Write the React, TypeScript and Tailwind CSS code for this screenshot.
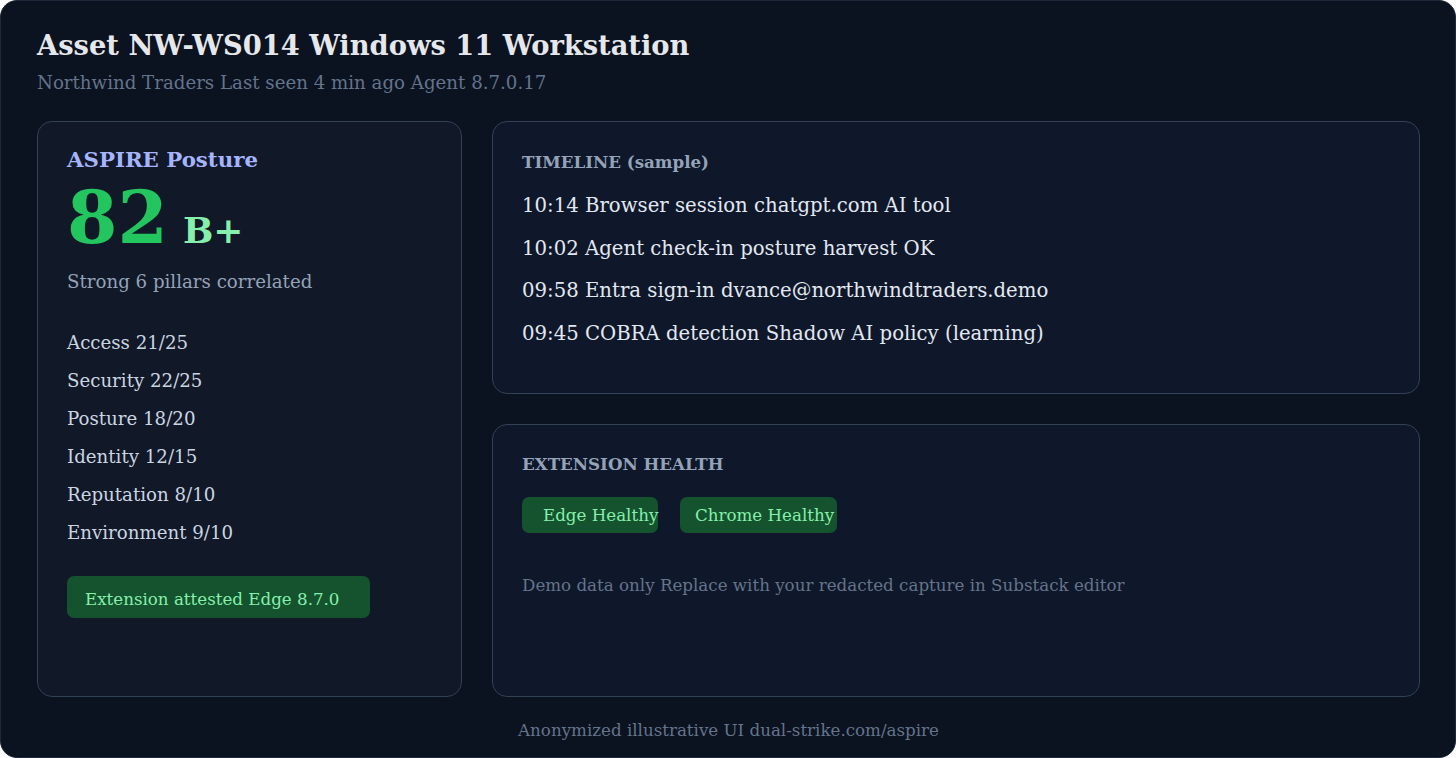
import React from "react";

const serif = { fontFamily: '"DejaVu Serif", serif' };

export default function App() {
  const pillars = [
    "Access 21/25",
    "Security 22/25",
    "Posture 18/20",
    "Identity 12/15",
    "Reputation 8/10",
    "Environment 9/10",
  ];
  const events = [
    "10:14 Browser session chatgpt.com AI tool",
    "10:02 Agent check-in posture harvest OK",
    "09:58 Entra sign-in dvance@northwindtraders.demo",
    "09:45 COBRA detection Shadow AI policy (learning)",
  ];
  return (
    <div className="w-[1456px] h-[758px] bg-white" style={serif}>
      <div className="w-full h-full rounded-[17px] bg-[#0b1220] border border-[#1e293b] pl-[36px] pr-[35px] pt-[28px] flex flex-col">
        <div className="text-[27.3px] leading-[32px] font-bold text-[#e5e7eb] whitespace-nowrap">
          Asset NW-WS014 Windows 11 Workstation
        </div>
        <div className="mt-[11px] text-[18.2px] leading-[22px] text-[#64748b] whitespace-nowrap">
          Northwind Traders Last seen 4 min ago Agent 8.7.0.17
        </div>

        <div className="mt-[27px] grid grid-cols-[425px_928px] gap-[30px] h-[576px]">
          {/* Left card */}
          <div className="h-[576px] rounded-[15px] border border-[#334155] bg-[#111827] pl-[29px] pt-[25px] flex flex-col">
            <div className="text-[21.3px] leading-[26px] font-bold text-[#a5b4fc] whitespace-nowrap">
              ASPIRE Posture
            </div>
            <div className="mt-[5px] flex items-baseline gap-[15px] h-[80px]">
              <span className="text-[72.5px] leading-[80px] font-bold text-[#22c55e]">82</span>
              <span className="text-[36px] leading-[40px] font-bold text-[#86efac]">B+</span>
            </div>
            <div className="mt-[13px] text-[18.2px] leading-[22px] text-[#94a3b8] whitespace-nowrap">
              Strong 6 pillars correlated
            </div>
            <div className="mt-[31px] flex flex-col">
              {pillars.map((p) => (
                <div key={p} className="text-[18.2px] leading-[38px] text-[#cbd5e1] whitespace-nowrap">
                  {p}
                </div>
              ))}
            </div>
            <div className="mt-[24px] w-[303px] h-[42px] rounded-[7px] bg-[#14532d] pl-[18px] pt-[13px]">
              <div className="text-[16.7px] leading-[20px] text-[#86efac] whitespace-nowrap">
                Extension attested Edge 8.7.0
              </div>
            </div>
          </div>

          {/* Right column */}
          <div className="flex flex-col gap-[30px]">
            <div className="h-[273px] rounded-[15px] border border-[#334155] bg-[#0f172a] pl-[29px] pt-[30px] flex flex-col">
              <div className="text-[16.7px] leading-[20px] font-bold text-[#94a3b8] whitespace-nowrap">
                TIMELINE (sample)
              </div>
              <div className="mt-[13px] flex flex-col">
                {events.map((e) => (
                  <div key={e} className="text-[19.7px] leading-[42.5px] text-[#e2e8f0] whitespace-nowrap">
                    {e}
                  </div>
                ))}
              </div>
            </div>

            <div className="h-[273px] rounded-[15px] border border-[#334155] bg-[#0f172a] pl-[29px] pt-[29px] flex flex-col">
              <div className="text-[16.7px] leading-[20px] font-bold text-[#94a3b8] whitespace-nowrap">
                EXTENSION HEALTH
              </div>
              <div className="mt-[23px] flex gap-[22px]">
                <div className="w-[136px] h-[36px] rounded-[7px] bg-[#14532d] pl-[21px] flex items-center">
                  <span className="text-[16.7px] leading-[20px] text-[#86efac] whitespace-nowrap">Edge Healthy</span>
                </div>
                <div className="w-[157px] h-[36px] rounded-[7px] bg-[#14532d] pl-[15px] flex items-center">
                  <span className="text-[16.7px] leading-[20px] text-[#86efac] whitespace-nowrap">Chrome Healthy</span>
                </div>
              </div>
              <div className="mt-[42px] text-[16.7px] leading-[20px] text-[#64748b] whitespace-nowrap">
                Demo data only Replace with your redacted capture in Substack editor
              </div>
            </div>
          </div>
        </div>

        <div className="mt-[23px] text-center text-[16.7px] leading-[20px] text-[#64748b] whitespace-nowrap">
          Anonymized illustrative UI dual-strike.com/aspire
        </div>
      </div>
    </div>
  );
}
